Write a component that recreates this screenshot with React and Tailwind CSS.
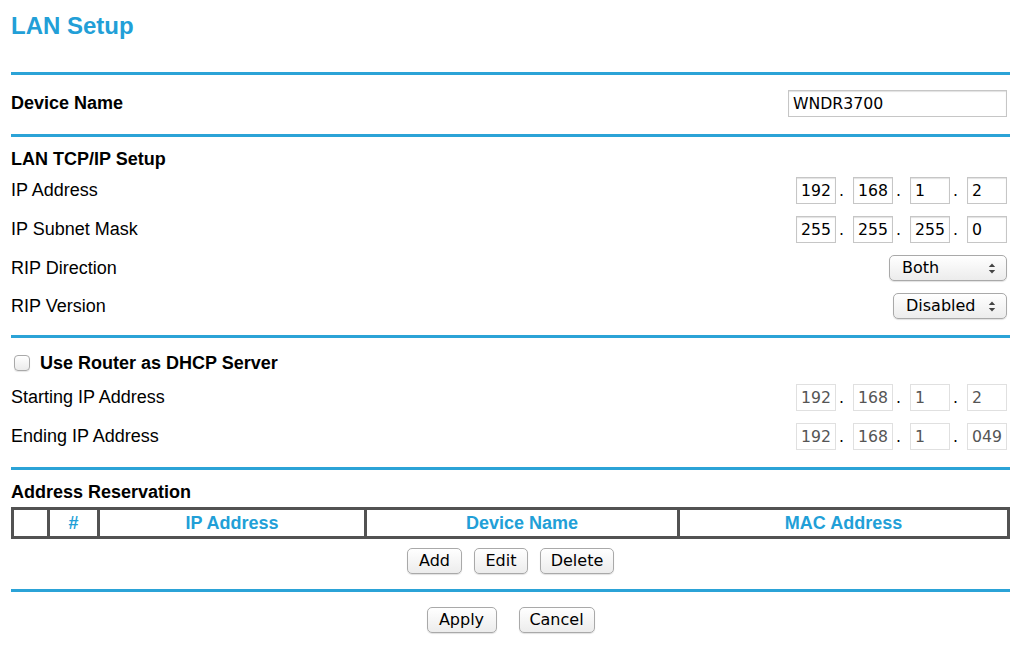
import React from "react"

const labelFont = "font-['Liberation_Sans',Arial,sans-serif]"
const ctrlFont = "font-['DejaVu_Sans','Liberation_Sans',sans-serif]"

function Rule({ className = "" }) {
  return <div className={`h-[3px] bg-[#2ba3d7] ${className}`} />
}

function Field({ value, width = "w-[40px]", disabled = false }) {
  return (
    <input
      defaultValue={value}
      disabled={disabled}
      className={`${width} h-[27px] pl-[4px] border outline-none ${ctrlFont} text-[15.7px] ${
        disabled
          ? "border-[#e0e0e0] text-[#555] bg-white"
          : "border-[#c6c6c6] text-black bg-white shadow-[inset_0_1px_1px_rgba(0,0,0,0.12)]"
      }`}
    />
  )
}

function IpGroup({ parts, disabled }) {
  return (
    <div className="flex items-baseline">
      {parts.map((p, i) => (
        <React.Fragment key={i}>
          {i > 0 && <span className={`w-[17px] pl-[3px] ${ctrlFont} text-[15.7px] text-black`}>.</span>}
          <Field value={p} disabled={disabled} />
        </React.Fragment>
      ))}
    </div>
  )
}

function Arrows() {
  return (
    <svg width="8" height="11" viewBox="0 0 8 11" className="shrink-0">
      <path d="M4 0.5 L7.2 4 L0.8 4 Z" fill="#444" />
      <path d="M4 10.5 L7.2 7 L0.8 7 Z" fill="#444" />
    </svg>
  )
}

function FakeSelect({ label, width }) {
  return (
    <div
      className={`${width} h-[26px] flex items-center justify-between pl-[12px] pr-[10px] rounded-[5px] border border-[#a9a9a9] bg-gradient-to-b from-white to-[#ececec] shadow-[0_1px_1px_rgba(0,0,0,0.12)] ${ctrlFont} text-[16px] text-black`}
    >
      <span>{label}</span>
      <Arrows />
    </div>
  )
}

function Btn({ children, width }) {
  return (
    <button
      className={`${width} h-[26px] flex items-center justify-center rounded-[5px] border border-[#a9a9a9] bg-gradient-to-b from-white to-[#ececec] shadow-[0_1px_1px_rgba(0,0,0,0.12)] ${ctrlFont} text-[16px] text-black`}
    >
      {children}
    </button>
  )
}

function Row({ label, bold, children, className = "", h = "h-[27px]" }) {
  return (
    <div className={`${h} flex items-center justify-between pr-[3px] ${className}`}>
      <span className={`text-[18px] text-black ${bold ? "font-bold" : ""}`}>{label}</span>
      {children}
    </div>
  )
}

export default function App() {
  const cols = [
    { w: "w-[33px]", t: "" },
    { w: "w-[47px]", t: "#" },
    { w: "w-[264px]", t: "IP Address" },
    { w: "w-[310px]", t: "Device Name" },
    { w: "flex-1", t: "MAC Address" },
  ]

  return (
    <div className={`w-[1024px] h-[656px] bg-white pl-[11px] pr-[14px] ${labelFont} overflow-hidden`}>
      {/* Title */}
      <div className="h-[72px] pt-[12px]">
        <h1 className="text-[24px] leading-[28px] font-bold text-[#229fd7]">LAN Setup</h1>
      </div>
      <Rule />

      {/* Device name */}
      <div className="h-[59px] pb-[2px] flex items-center justify-between pr-[3px]">
        <span className="text-[18px] font-bold text-black">Device Name</span>
        <Field value="WNDR3700" width="w-[219px]" />
      </div>
      <Rule />

      {/* LAN TCP/IP */}
      <div className="mt-[12px] h-[20px] flex items-center">
        <span className="text-[18px] font-bold text-black">LAN TCP/IP Setup</span>
      </div>
      <Row label="IP Address" className="mt-[8px]">
        <IpGroup parts={["192", "168", "1", "2"]} />
      </Row>
      <Row label="IP Subnet Mask" className="mt-[12px]">
        <IpGroup parts={["255", "255", "255", "0"]} />
      </Row>
      <Row label="RIP Direction" className="mt-[12px]" h="h-[26px]">
        <FakeSelect label="Both" width="w-[118px]" />
      </Row>
      <Row label="RIP Version" className="mt-[12px]" h="h-[26px]">
        <FakeSelect label="Disabled" width="w-[114px]" />
      </Row>
      <Rule className="mt-[16px]" />

      {/* DHCP */}
      <div className="mt-[17px] h-[16px] flex items-center">
        <span className="ml-[3px] w-[16px] h-[16px] rounded-[4px] border border-[#a9a9a9] bg-gradient-to-b from-white to-[#ebebeb] shadow-[0_1px_1px_rgba(0,0,0,0.1)]" />
        <span className="ml-[10px] text-[18px] font-bold text-black">Use Router as DHCP Server</span>
      </div>
      <Row label="Starting IP Address" className="mt-[13px]">
        <IpGroup parts={["192", "168", "1", "2"]} disabled />
      </Row>
      <Row label="Ending IP Address" className="mt-[12px]">
        <IpGroup parts={["192", "168", "1", "049"]} disabled />
      </Row>
      <Rule className="mt-[17px]" />

      {/* Address reservation */}
      <div className="mt-[12px] h-[20px] flex items-center">
        <span className="text-[18px] font-bold text-black">Address Reservation</span>
      </div>
      <div className="mt-[5px] h-[32px] flex gap-[3px] p-[3px] bg-[#525252]">
        {cols.map((c, i) => (
          <div key={i} className={`${c.w} bg-white flex items-center justify-center text-[18px] font-bold text-[#229fd7]`}>
            {c.t}
          </div>
        ))}
      </div>
      <div className="mt-[9px] flex justify-center gap-[12px]">
        <Btn width="w-[55px]">Add</Btn>
        <Btn width="w-[54px]">Edit</Btn>
        <Btn width="w-[74px]">Delete</Btn>
      </div>
      <Rule className="mt-[15px]" />

      <div className="mt-[15px] flex justify-center gap-[22px]">
        <Btn width="w-[70px]">Apply</Btn>
        <Btn width="w-[76px]">Cancel</Btn>
      </div>
    </div>
  )
}
